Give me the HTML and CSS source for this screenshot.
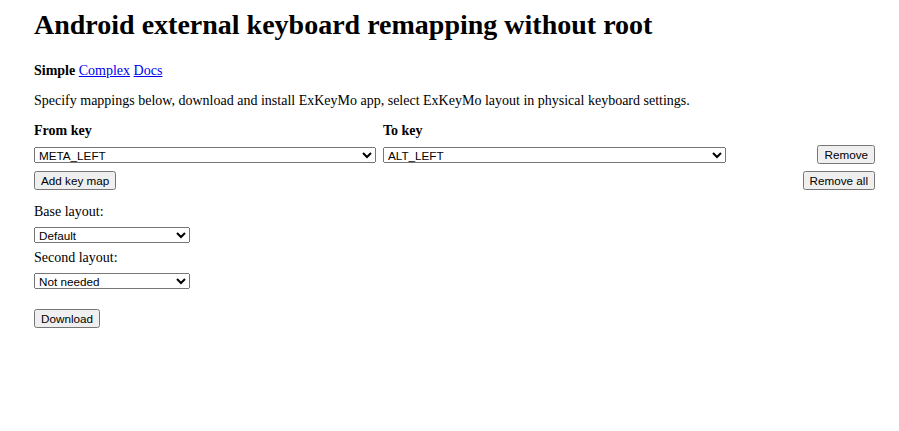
FILE: index.html
```html
<!DOCTYPE html>
<html>
<head>
<meta charset="utf-8">
<link rel="stylesheet" href="styles.css">
<title>ExKeyMo</title>
</head>
<body>
<div class="page">
  <h1 class="title">Android external keyboard remapping without root</h1>
  <p class="nav"><b>Simple</b> <a href="#">Complex</a> <a href="#">Docs</a></p>
  <p class="intro">Specify mappings below, download and install ExKeyMo app, select ExKeyMo layout in physical keyboard settings.</p>
  <div class="map-grid">
    <div class="col-head">From key</div>
    <div class="col-head">To key</div>
    <div></div>
    <select class="ctl key-select"><option>META_LEFT</option></select>
    <select class="ctl key-select"><option>ALT_LEFT</option></select>
    <div class="right"><button class="ctl btn">Remove</button></div>
    <div><button class="ctl btn">Add key map</button></div>
    <div></div>
    <div class="right"><button class="ctl btn">Remove all</button></div>
  </div>
  <div class="layouts">
    <div class="label">Base layout:</div>
    <select class="ctl layout-select"><option>Default</option></select>
    <div class="label">Second layout:</div>
    <select class="ctl layout-select"><option>Not needed</option></select>
    <div class="dl"><button class="ctl btn">Download</button></div>
  </div>
</div>
</body>
</html>
```
FILE: styles.css
```css
html, body {
  margin: 0;
  padding: 0;
  background: #fff;
}
body {
  font-family: "Liberation Serif", "Times New Roman", serif;
  font-size: 14px;
  color: #000;
}
.page {
  padding: 7px 24px 0 34px;
}
.title {
  font-size: 28px;
  font-weight: bold;
  margin: 0 0 20px 0;
  line-height: 36px;
}
.nav {
  margin: 0 0 14px 0;
  line-height: 16px;
}
.nav a { color: #0000ee; }
.intro {
  margin: 0 0 14px 0;
  line-height: 16px;
}
.col-head {
  font-weight: bold;
  line-height: 15px;
}
.map-grid {
  display: grid;
  grid-template-columns: 342px 343px 1fr;
  column-gap: 7px;
  row-gap: 7px;
  align-items: center;
}
.right { text-align: right; }
.ctl {
  font-family: "Liberation Sans", Arial, sans-serif;
  font-size: 11.7px;
}
.key-select, .layout-select {
  height: 16px;
  padding: 0;
  margin: 0;
}
.layout-select {
  width: 156px;
  display: block;
  margin-bottom: 7px;
}
.btn {
  margin: 0;
  height: 19px;
  padding: 0 5px;
  vertical-align: top;
}
.layouts { margin-top: 14px; }
.label { line-height: 16px; margin-bottom: 7px; }
.dl { margin-top: 20px; }
```
